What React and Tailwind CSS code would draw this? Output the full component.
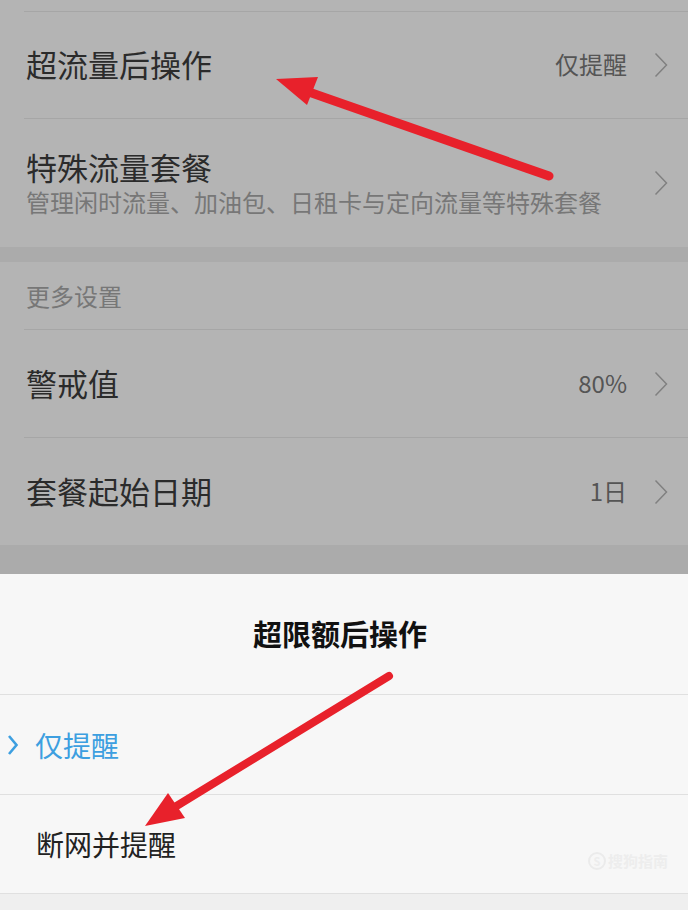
import React from 'react';

const font = { fontFamily: '"Noto Sans CJK SC", "Noto Sans", sans-serif' };

const Chevron = () => (
  <svg width="14" height="26" viewBox="0 0 14 26" className="shrink-0">
    <path d="M1.5 1.5 L12.5 13 L1.5 24.5" fill="none" stroke="#808080" strokeWidth="1.5" />
  </svg>
);

const Row = ({ title, sub, value, height, border = true }) => (
  <div className={`flex items-center pr-[20px] ${height} ${border ? 'border-b border-[#a6a6a6]' : ''}`}>
    <div className={`flex-1 flex flex-col pl-[2px] ${sub ? '' : 'pb-[2px]'}`}>
      <div className="text-[31px] leading-[36px] text-[#2b2b2b]">{title}</div>
      {sub && <div className="text-[24px] leading-[30px] mt-[2px] text-[#777777]">{sub}</div>}
    </div>
    {value && <div className="text-[24px] text-[#555555] mr-[27px] -mt-[2px]">{value}</div>}
    <Chevron />
  </div>
);

const App = () => {
  return (
    <div className="relative w-[688px] h-[910px] overflow-hidden bg-[#b4b4b4] flex flex-col" style={font}>
      {/* dimmed settings list */}
      <div className="pl-[24px]">
        <div className="h-[12px] border-b border-[#a6a6a6]" />
        <Row title="超流量后操作" value="仅提醒" height="h-[107px]" />
        <Row
          title="特殊流量套餐"
          sub="管理闲时流量、加油包、日租卡与定向流量等特殊套餐"
          height="h-[128px]"
          border={false}
        />
      </div>
      <div className="h-[15px] bg-[#ababab]" />
      <div className="pl-[24px]">
        <div className="h-[68px] flex items-center pl-[2px] text-[24px] text-[#777777] border-b border-[#a6a6a6]">更多设置</div>
        <Row title="警戒值" value="80%" height="h-[108px]" />
        <Row title="套餐起始日期" value="1日" height="h-[107px]" border={false} />
      </div>
      <div className="h-[29px] bg-[#ababab]" />

      {/* bottom sheet */}
      <div className="flex-1 bg-[#f7f7f7] flex flex-col">
        <div className="h-[121px] flex items-center justify-center pr-[8px] border-b border-[#e0e0e0] text-[29px] font-bold text-[#111111]">
          超限额后操作
        </div>
        <div className="h-[100px] flex items-center border-b border-[#e0e0e0]">
          <svg width="12" height="22" viewBox="0 0 12 22" className="ml-[7px] mr-[16px]">
            <path d="M2 2 L9.5 11 L2 20" fill="none" stroke="#3d9fe0" strokeWidth="2.6" />
          </svg>
          <span className="text-[28px] text-[#3d9fe0]">仅提醒</span>
        </div>
        <div className="h-[99px] flex items-center pl-[36px] border-b border-[#e0e0e0] text-[28px] text-[#222222]">
          断网并提醒
        </div>
        <div className="flex-1 bg-[#efefef]" />
      </div>

      {/* watermark */}
      <div className="absolute left-[588px] top-[850px] flex items-center gap-[2px] text-[#ededed]">
        <span className="w-[18px] h-[18px] rounded-full border-2 border-[#ebebeb] text-[11px] leading-[14px] font-bold flex items-center justify-center">S</span>
        <span className="text-[15px] font-bold">搜狗指南</span>
      </div>

      {/* annotation arrows */}
      <svg className="absolute left-0 top-0 pointer-events-none" width="688" height="910">
        <line x1="549" y1="176" x2="306" y2="91" stroke="#e8212b" strokeWidth="9" strokeLinecap="round" />
        <polygon points="276,79 318,77 307,105" fill="#e8212b" />
        <line x1="389" y1="676" x2="170" y2="810" stroke="#e8212b" strokeWidth="8" strokeLinecap="round" />
        <polygon points="145,826 168,793 185,818" fill="#e8212b" />
      </svg>
    </div>
  );
};

export default App;
